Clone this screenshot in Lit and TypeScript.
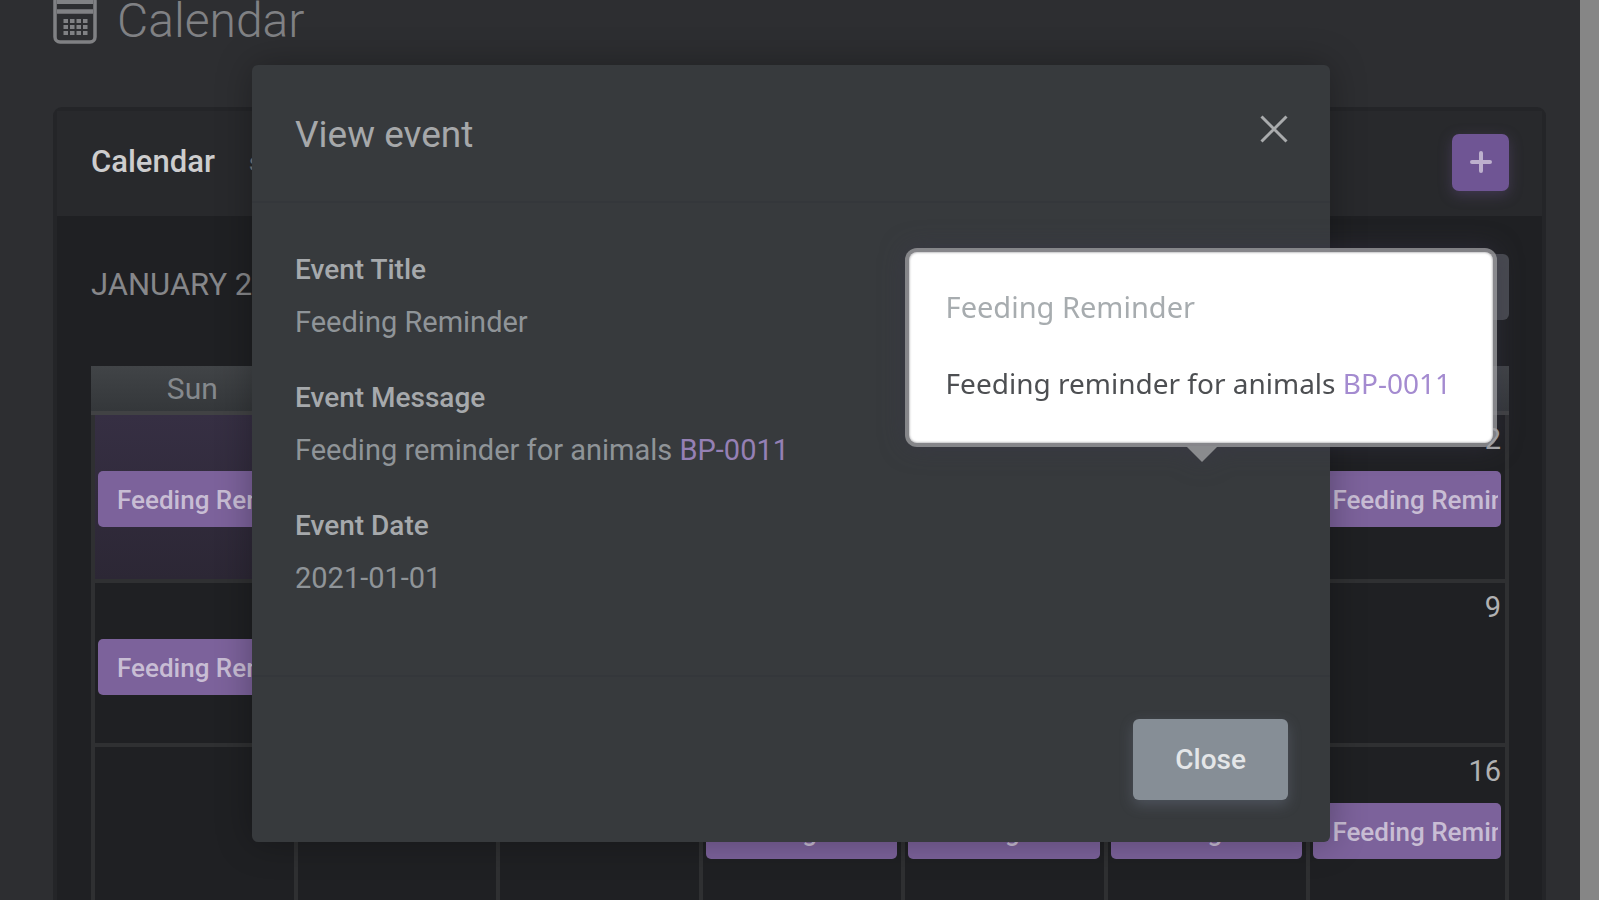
import { LitElement, html, css, svg, nothing } from "lit";
import { customElement, property } from "lit/decorators.js";

interface Day {
  date?: number;
  event?: boolean;
  muted?: boolean;
}

const EVENT_NAME = "Feeding Reminder";
const WEEKDAYS = ["Sun", "Mon", "Tue", "Wed", "Thu", "Fri", "Sat"];

const WEEKS: Day[][] = [
  [{ event: true, muted: true }, {}, {}, {}, {}, {}, { date: 2, event: true }],
  [{ event: true }, {}, {}, {}, {}, {}, { date: 9 }],
  [{}, {}, {}, { event: true }, { event: true }, { event: true }, { date: 16, event: true }],
];

@customElement("month-table")
export class MonthTable extends LitElement {
  static styles = css`
    :host {
      display: block;
    }
    .month {
      width: 100%;
      table-layout: fixed;
      border-spacing: 0;
    }
    .weekday {
      height: 45px;
      padding: 0;
      font-size: 30px;
      font-weight: 400;
      line-height: 36px;
      vertical-align: middle;
      color: #85898d;
      background: linear-gradient(#414447, #34373a);
      border-bottom: 4px solid #414244;
    }
    .day {
      height: 160px;
      padding: 0;
      vertical-align: top;
      border-left: 4px solid #2f3032;
      border-bottom: 4px solid #2f3032;
    }
    .day:last-child {
      border-right: 4px solid #2f3032;
    }
    .first .day {
      height: 164px;
    }
    .muted {
      background: linear-gradient(#362f43, #2c2735);
    }
    .date {
      height: 56px;
      padding: 6px 4px 0 0;
      box-sizing: border-box;
      text-align: right;
      font-size: 29px;
      line-height: 36px;
      color: #b0b1b2;
    }
    .event {
      display: block;
      height: 56px;
      margin: 0 4px 0 3px;
      padding: 0 3px 0 19px;
      border-radius: 5px;
      background: #7c629b;
      color: #c8bdd4;
      text-decoration: none;
      font-size: 26px;
      font-weight: 500;
      line-height: 58px;
    }
    .label {
      display: block;
      overflow: hidden;
      white-space: nowrap;
    }
  `;

  render() {
    return html`
      <table class="month">
        <thead>
          <tr>
            ${WEEKDAYS.map((d) => html`<th class="weekday" scope="col">${d}</th>`)}
          </tr>
        </thead>
        <tbody>
          ${WEEKS.map(
            (week, i) => html`<tr class=${i === 0 ? "first" : "row"}>
              ${week.map(
                (day) => html`<td class="day ${day.muted ? "muted" : ""}">
                  <div class="date">${day.date ?? nothing}</div>
                  ${day.event
                    ? html`<a class="event" href="#"><span class="label">${EVENT_NAME}</span></a>`
                    : nothing}
                </td>`
              )}
            </tr>`
          )}
        </tbody>
      </table>
    `;
  }
}

@customElement("event-dialog")
export class EventDialog extends LitElement {
  static styles = css`
    :host {
      display: block;
      width: 1078px;
      max-width: 90%;
    }
    .dialog {
      border-radius: 6px;
      background: #373a3d;
      box-shadow: 0 0 36px rgba(0, 0, 0, 0.3);
      color: #8f9498;
    }
    .head {
      display: flex;
      justify-content: space-between;
      align-items: flex-start;
      height: 138px;
      box-sizing: border-box;
      padding: 42px 42px 0 43px;
      border-bottom: 2px solid #34373b;
    }
    .title {
      margin: 0;
      font-size: 37px;
      font-weight: 400;
      line-height: 56px;
      color: #a6a8aa;
    }
    .dismiss {
      display: block;
      margin: 8px 0 0;
      padding: 0;
      border: 0;
      background: none;
    }
    .dismiss svg {
      display: block;
      width: 28px;
      height: 28px;
    }
    .body {
      display: grid;
      gap: 24px;
      margin: 0;
      padding: 41px 43px 71px;
      font-size: 29px;
      line-height: 52px;
    }
    .name {
      font-size: 28px;
      font-weight: 500;
      color: #a6a9ac;
    }
    .value {
      margin: 0;
    }
    .link {
      color: #9580b5;
      text-decoration: none;
    }
    .foot {
      display: flex;
      justify-content: flex-end;
      padding: 42px;
      border-top: 2px solid #34373b;
    }
    .close {
      height: 81px;
      padding: 0 42px;
      border: 0;
      border-radius: 6px;
      background: #868e96;
      box-shadow: 0 5px 14px rgba(134, 142, 165, 0.3);
      color: #e4e6e8;
      font: 500 28px / 36px Roboto, sans-serif;
    }
  `;

  render() {
    return html`
      <section class="dialog" role="dialog" aria-labelledby="title">
        <header class="head">
          <h2 class="title" id="title">View event</h2>
          <button class="dismiss" type="button" aria-label="Close dialog">
            <svg viewBox="0 0 28 28" fill="none" stroke="#a9abad" stroke-width="3">
              <path d="M1.5 1.5 26.5 26.5M26.5 1.5 1.5 26.5" />
            </svg>
          </button>
        </header>
        <dl class="body">
          <div>
            <dt class="name">Event Title</dt>
            <dd class="value">Feeding Reminder</dd>
          </div>
          <div>
            <dt class="name">Event Message</dt>
            <dd class="value">
              Feeding reminder for animals <a class="link" href="#">BP-0011</a>
            </dd>
          </div>
          <div>
            <dt class="name">Event Date</dt>
            <dd class="value">2021-01-01</dd>
          </div>
        </dl>
        <footer class="foot">
          <button class="close" type="button">Close</button>
        </footer>
      </section>
    `;
  }
}

@customElement("event-popover")
export class EventPopover extends LitElement {
  @property() heading = "";

  static styles = css`
    :host {
      display: block;
      filter: drop-shadow(0 0 12px rgba(58, 54, 76, 0.5));
    }
    .bubble {
      position: relative;
      border: 4px solid rgba(160, 160, 163, 0.75);
      border-radius: 12px;
      background: #fff;
      background-clip: padding-box;
      box-shadow: inset 0 0 2px 1px #c4c4c6;
      padding: 36px 42px 41px 37px;
      font-family: "Noto Sans", sans-serif;
      font-size: 28px;
      line-height: 38px;
      white-space: nowrap;
    }
    .bubble::after {
      content: "";
      position: absolute;
      top: calc(100% + 3px);
      left: 50%;
      border: 16px solid transparent;
      border-bottom: 0;
      border-top-color: #8a8b8e;
      translate: -15px 0;
    }
    .heading {
      margin: 0 0 38px;
      font-size: 29px;
      font-weight: 400;
      color: #a7acaf;
    }
    .text {
      margin: 0;
      color: #4d4f52;
    }
    .link {
      color: #a48bd0;
      text-decoration: none;
    }
  `;

  render() {
    return html`
      <div class="bubble" role="tooltip">
        <h3 class="heading">${this.heading}</h3>
        <p class="text">
          Feeding reminder for animals <a class="link" href="#">BP-0011</a>
        </p>
      </div>
    `;
  }
}

@customElement("app-root")
export class AppRoot extends LitElement {
  static styles = css`
    :host {
      display: block;
      font-family: Roboto, sans-serif;
    }
    .app {
      position: relative;
      display: grid;
      grid-template-columns: 1fr 19px;
      height: 100vh;
      overflow: hidden;
      background: #2d2e31;
    }
    .page {
      min-width: 0;
      padding: 0 34px 0 53px;
    }
    .page-title {
      display: flex;
      align-items: flex-start;
      gap: 20px;
      height: 107px;
      margin: 0;
      font-size: 48px;
      font-weight: 300;
      line-height: 42px;
      color: #808184;
    }
    .page-title svg {
      width: 44px;
      height: 44px;
    }
    .card {
      border: 4px solid #242528;
      border-radius: 9px;
      background: #1f2023;
    }
    .card-head {
      display: flex;
      align-items: center;
      gap: 34px;
      height: 102px;
      padding: 0 33px 3px 34px;
      background: #28292c;
    }
    .card-title {
      margin: 0;
      font-size: 31px;
      font-weight: 500;
      line-height: 40px;
      color: #cdcdce;
    }
    .card-sub {
      flex: 1;
      font-size: 26px;
      color: #77797c;
    }
    .add {
      width: 57px;
      height: 57px;
      padding: 0;
      border: 0;
      border-radius: 7px;
      background: #6f5594;
      box-shadow: 0 4px 14px rgba(111, 85, 148, 0.35);
    }
    .add svg {
      display: block;
      width: 22px;
      height: 22px;
      margin: auto;
    }
    .toolbar {
      display: flex;
      justify-content: space-between;
      align-items: flex-start;
      height: 150px;
      box-sizing: border-box;
      padding: 38px 33px 0 34px;
    }
    .month-name {
      margin: 0;
      padding-top: 12px;
      font-size: 31px;
      font-weight: 400;
      line-height: 38px;
      text-transform: uppercase;
      color: #86878a;
    }
    .nav {
      width: 72px;
      height: 66px;
      border: 0;
      border-radius: 6px;
      background: #484a50;
    }
    .month {
      padding: 0 33px 0 34px;
    }
    .scrollbar {
      display: flex;
      align-items: flex-end;
      background: #868686;
    }
    .scroll-end {
      flex: 1;
      height: 8px;
      background: #f1f1f1;
    }
    .overlay {
      position: absolute;
      inset: 0 17px 0 0;
      display: flex;
      justify-content: center;
      align-items: flex-start;
      padding-top: 65px;
    }
    .popover {
      position: absolute;
      top: 248px;
      right: 102px;
    }
  `;

  render() {
    return html`
      <div class="app">
        <main class="page">
          <h1 class="page-title">
            <svg viewBox="0 0 44 44" fill="none" stroke="#808184" aria-hidden="true">
              <rect x="2" y="-4" width="40" height="46" rx="5" stroke-width="3.500" />
              <path d="M4 1.500H40" stroke-width="5" />
              <path d="M4 11.500H40" stroke-width="4.500" />
              ${[0, 1, 2, 3].map(
                (c) => svg`
                  <path d="M${10.5 + c * 6.5} 21h4.500M${10.5 + c * 6.5} 27h4.500M${10.5 + c * 6.5} 33h4.500"
                    stroke-width="4" />`
              )}
            </svg>
            Calendar
          </h1>
          <section class="card">
            <header class="card-head">
              <h2 class="card-title">Calendar</h2>
              <span class="card-sub">schedule</span>
              <button class="add" type="button" aria-label="Add event">
                <svg viewBox="0 0 22 22" stroke="#bdb0cd" stroke-width="4" stroke-linecap="round">
                  <path d="M2 11H20M11 2V20" />
                </svg>
              </button>
            </header>
            <div class="toolbar">
              <h3 class="month-name">January 2021</h3>
              <button class="nav" type="button" aria-label="Next month"></button>
            </div>
            <month-table class="month"></month-table>
          </section>
        </main>
        <div class="scrollbar"><div class="scroll-end"></div></div>
        <div class="overlay"><event-dialog></event-dialog></div>
        <event-popover class="popover" heading="Feeding Reminder"></event-popover>
      </div>
    `;
  }
}
